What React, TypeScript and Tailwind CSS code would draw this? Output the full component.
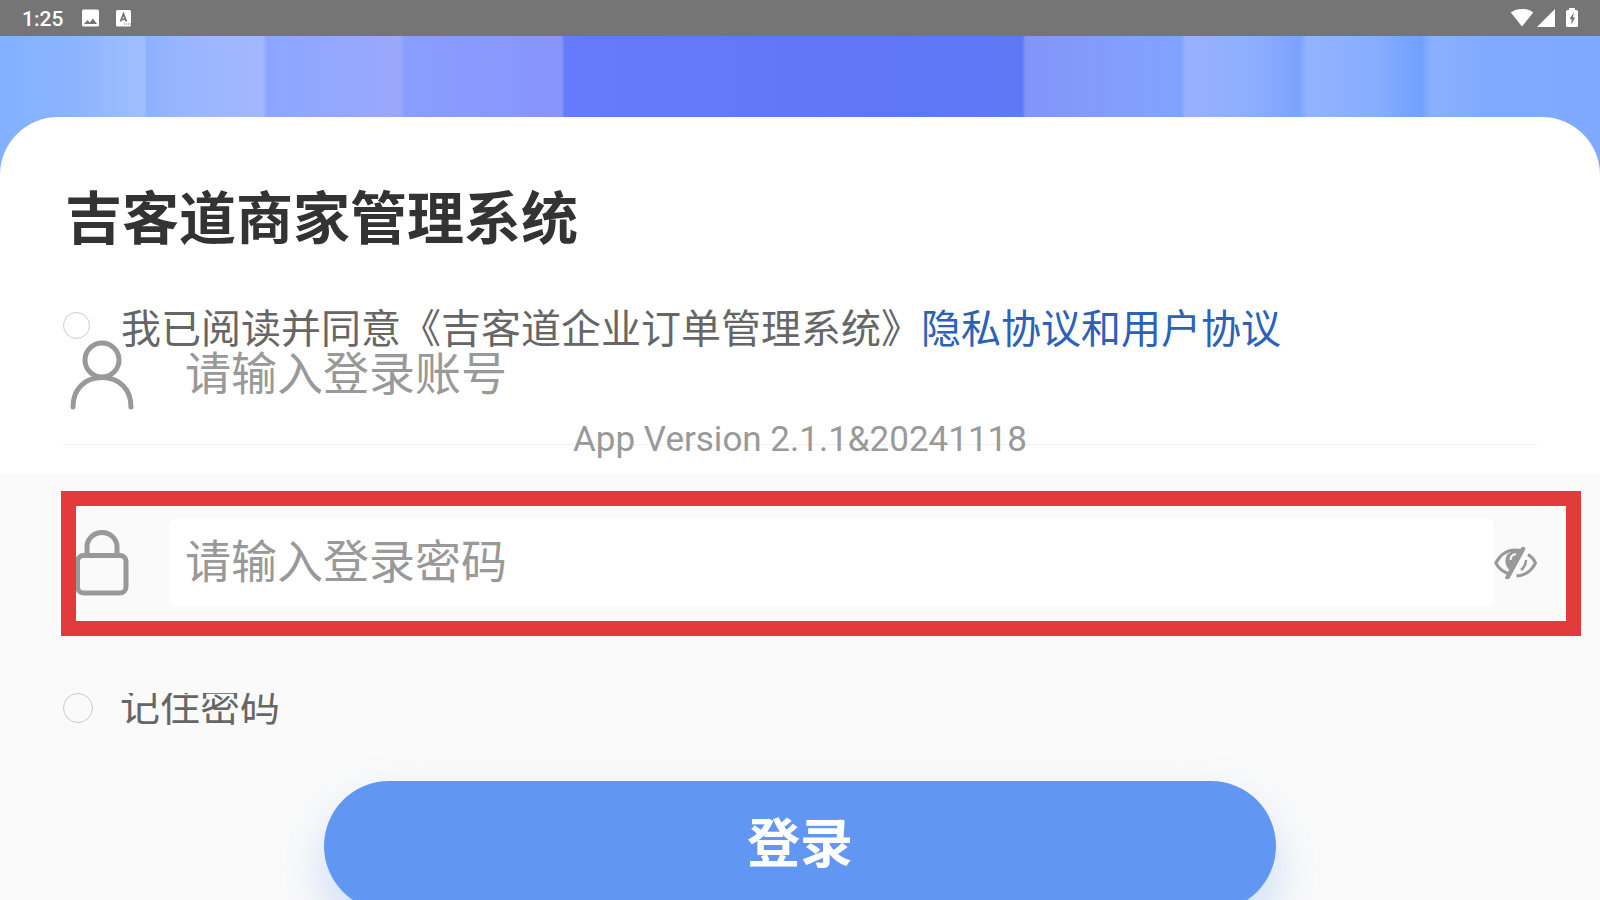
import * as React from 'react';

function StatusBar() {
  return (
    <header className="flex h-9 items-center justify-between bg-[#757575] px-[22px] text-white">
      <div className="flex items-center">
        <span className="w-[59px] pt-0.5 text-[21px] leading-7 font-medium">
          1:25
        </span>
        <svg className="size-5" viewBox="0 0 20 20" fill="currentColor">
          <path
            fillRule="evenodd"
            d="M2.500 1.500h14a1.500 1.500 0 0 1 1.500 1.500v14a1.500 1.500 0 0 1-1.500 1.500h-14A1.500 1.500 0 0 1 1 17V3a1.500 1.500 0 0 1 1.500-1.500zM3 16h13l-4-5.500L8.800 14.500 6.500 12z"
          />
        </svg>
        <svg className="ml-3.5 size-5" viewBox="0 0 20 20">
          <rect x="1" y="2" width="15" height="16.500" rx="1.500" fill="#fff" />
          <path
            d="M5.500 13.500 8.500 6 11.500 13.500M6.500 11.300h4"
            fill="none"
            stroke="#757575"
            strokeWidth="1.800"
          />
          <path d="M9 16h7" stroke="#757575" strokeDasharray="1 1" />
        </svg>
      </div>
      <div className="flex items-center">
        <svg className="h-5 w-6" viewBox="0 0 24 20" fill="currentColor">
          <path d="M12 18.500.8 4.500C4 2 7.800 1 12 1s8 1 11.200 3.500z" />
        </svg>
        <svg className="ml-0.5 size-5" viewBox="0 0 20 20" fill="currentColor">
          <path d="M1 19 19 1v18z" />
        </svg>
        <svg className="ml-2.5 h-5 w-3" viewBox="0 0 12 20" fill="currentColor">
          <path
            fillRule="evenodd"
            d="M3 0h6v2h1.500A1.500 1.500 0 0 1 12 3.500v14a1.500 1.500 0 0 1-1.500 1.500h-9A1.500 1.500 0 0 1 0 17.500v-14A1.500 1.500 0 0 1 1.500 2H3zM8 4.500 3.500 11h2v5.500L9 9.500H7z"
          />
        </svg>
      </div>
    </header>
  );
}

function UserIcon() {
  return (
    <svg
      className="h-[70px] w-[78px] shrink-0"
      viewBox="0 0 78 70"
      fill="none"
      stroke="#999"
      strokeWidth="5"
      strokeLinecap="round"
    >
      <circle cx="39" cy="20" r="17" />
      <path d="M10 67C10 49 22 37.500 39 37.500S68 49 68 67" />
    </svg>
  );
}

function LockIcon() {
  return (
    <svg
      className="h-[70px] w-[78px] shrink-0"
      viewBox="0 0 78 70"
      fill="none"
      stroke="#999"
      strokeWidth="5"
    >
      <rect x="14.500" y="27.500" width="48.500" height="37.500" rx="6" />
      <path d="M24 27.500V19a15 14.500 0 0 1 30 0v8.500" />
    </svg>
  );
}

function EyeOffIcon() {
  return (
    <svg className="h-8 w-[43px]" viewBox="0 0 43 32" fill="none" stroke="#999">
      <path
        d="M27 3.500C14 1 6 8 1.800 16c2.500 4.500 6.500 8.500 12 10.500M34 7.500c3.500 2 6 5 7.500 8.500C37.500 24 30.500 28.500 22.500 29"
        strokeWidth="3"
      />
      <path
        d="M28 3.500c-7-1-11 1-14.500 4-3.500 5-2.500 12 2.500 16z"
        fill="#999"
        stroke="none"
      />
      <path d="M16.500 13c0-3.500 2-5.500 5.500-6" stroke="#fafafa" strokeWidth="2" />
      <path d="M32 13c0 4-1.500 7-5 10" strokeWidth="2.500" />
      <path d="M29 2 13.500 30.500" strokeWidth="4.500" strokeLinecap="round" />
    </svg>
  );
}

export default function App() {
  const [visible, setVisible] = React.useState(false);
  return (
    <div className="h-screen overflow-hidden bg-[#fafafa] font-['Roboto','Noto_Sans_CJK_SC',sans-serif]">
      <StatusBar />
      <form onSubmit={(e) => e.preventDefault()}>
        <div className="bg-[linear-gradient(90deg,#82b1ff_0%,#8ab2ff_4%,#a0bfff_9%,#8db0fd_9.2%,#98b5ff_11%,#a2b8ff_16.4%,#8ba6ff_16.7%,#9ba8fb_25%,#889eff_25.3%,#8894f9_35.1%,#657afc_35.3%,#6075f8_55%,#5f79f6_63.9%,#8295f8_64.1%,#839ffd_71%,#7ea2fd_73.8%,#98b0ff_74.1%,#8faeff_78%,#7ca2ff_81.2%,#93b3ff_81.7%,#87adff_86%,#70a0ff_88.8%,#8cb0ff_89.5%,#80a9ff_93%,#7fa8ff_100%)] pt-[81px]">
          <div className="relative rounded-t-[58px] bg-white px-[63px] pt-[71px] pb-[29px]">
            <h1 className="px-0.5 text-[57px] leading-[64px] font-bold text-[#333]">
              吉客道商家管理系统
            </h1>
            <div className="mt-[79px] flex items-center border-b border-[#f2f2f2] pb-[25px]">
              <label htmlFor="account">
                <UserIcon />
              </label>
              <input
                id="account"
                type="text"
                placeholder="请输入登录账号"
                className="ml-7 h-[88px] min-w-0 flex-1 rounded-lg px-4 pb-[3px] text-[46px] outline-none placeholder:text-[#999]"
              />
            </div>
            <div className="absolute inset-x-[63px] top-[185px] flex flex-col">
              <div className="flex items-start">
                <input
                  id="agree"
                  type="checkbox"
                  className="mt-[10px] size-[27px] appearance-none rounded-full border border-[#ccc] bg-white checked:bg-[#6197f3]"
                />
                <label
                  htmlFor="agree"
                  className="ml-[31px] text-[40px] leading-[56px] text-[#666]"
                >
                  我已阅读并同意《吉客道企业订单管理系统》
                  <a href="#agreement" className="text-[#2b62b8]">
                    隐私协议和用户协议
                  </a>
                </label>
              </div>
              <p className="mt-[61px] self-center text-[35px] leading-[42px] text-[#999]">
                App Version 2.1.1&amp;20241118
              </p>
            </div>
          </div>
        </div>

        <div className="relative flex items-center px-[63px] py-[45px]">
          <label htmlFor="password">
            <LockIcon />
          </label>
          <input
            id="password"
            type={visible ? 'text' : 'password'}
            placeholder="请输入登录密码"
            className="ml-7 h-[88px] min-w-0 flex-1 rounded-lg bg-white px-4 pb-[3px] text-[46px] outline-none placeholder:text-[#999]"
          />
          <button
            type="button"
            aria-label="显示密码"
            onClick={() => setVisible(!visible)}
          >
            <EyeOffIcon />
          </button>
          <div className="pointer-events-none absolute top-[17px] right-[19px] left-[61px] h-[145px] border-[15px] border-[#e33b3b]" />
        </div>

        {/* the row is lower than its label, so the label's top is cut */}
        <div className="mt-[41px] flex h-8 items-start overflow-hidden px-[63px]">
          <input
            id="remember"
            type="checkbox"
            className="size-[30px] appearance-none rounded-full border border-[#ccc] checked:bg-[#6197f3]"
          />
          <label
            htmlFor="remember"
            className="ml-[27px] text-[40px] leading-[30px] text-[#666]"
          >
            记住密码
          </label>
        </div>

        <div className="mt-14 px-81">
          <button
            type="submit"
            className="h-[130px] w-full rounded-full bg-[#6197f3] text-[53px] font-bold text-white shadow-[0_24px_48px_rgba(97,151,243,0.3)]"
          >
            登录
          </button>
        </div>
      </form>
    </div>
  );
}
